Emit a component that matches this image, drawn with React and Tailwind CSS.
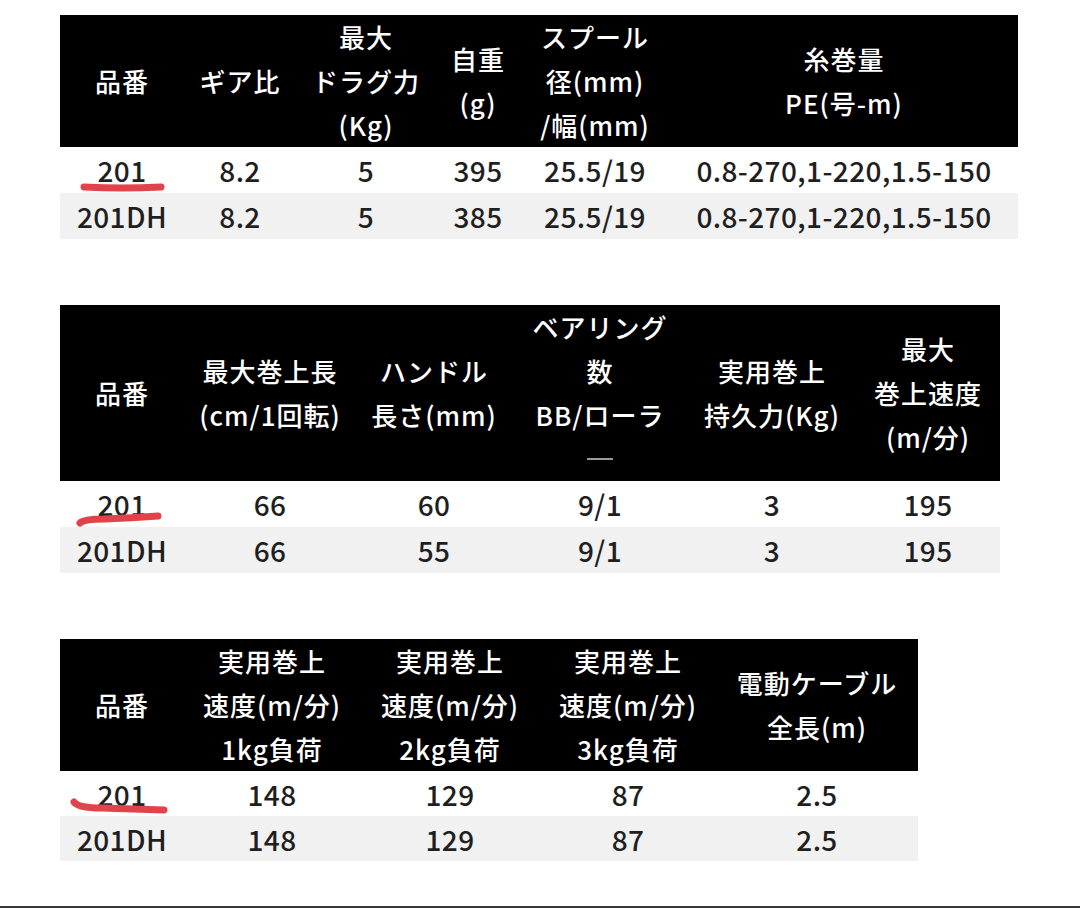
const font = { fontFamily: '"Noto Sans CJK JP", "Noto Sans", sans-serif' }

function HeadCell({ lines }) {
  return (
    <div className="flex flex-col items-center justify-center text-white text-[26px] leading-[44px] font-medium tracking-[1px] whitespace-nowrap">
      {lines.map((l, i) =>
        l === '—' ? (
          <div key={i} className="h-[44px] flex items-center">
            <div className="w-[26px] h-[2px] bg-[#9a9a9a]" />
          </div>
        ) : (
          <div key={i}>{l}</div>
        )
      )}
    </div>
  )
}

function SpecTable({ cols, head, rows, rowH }) {
  return (
    <div className="bg-black grid" style={{ gridTemplateColumns: cols, width: 'fit-content' }}>
      {head.map((h, i) => (
        <HeadCell key={i} lines={h} />
      ))}
      {rows.map((r, ri) =>
        r.map((c, ci) => (
          <div
            key={ri + '-' + ci}
            className={`${rowH} flex items-center justify-center text-[28px] tracking-[0.4px] font-medium text-[#1f1f1f] whitespace-nowrap ${ri === 1 ? 'bg-[#f1f1f1]' : 'bg-white'}`}
          >
            {c}
          </div>
        ))
      )}
    </div>
  )
}

export default function App() {
  return (
    <div className="relative w-[1080px] h-[908px] bg-white overflow-hidden" style={font}>
      <div className="flex flex-col gap-[66px] pt-[15px] pl-[60px]">
        <SpecTable
          cols="124px 112px 140px 84px 150px 348px"
          rowH="h-[46px]"
          head={[
            ['品番'],
            ['ギア比'],
            ['最大', 'ドラグ力', '(Kg)'],
            ['自重', '(g)'],
            ['スプール', '径(mm)', '/幅(mm)'],
            ['糸巻量', 'PE(号-m)'],
          ]}
          rows={[
            ['201', '8.2', '5', '395', '25.5/19', '0.8-270,1-220,1.5-150'],
            ['201DH', '8.2', '5', '385', '25.5/19', '0.8-270,1-220,1.5-150'],
          ]}
        />
        <SpecTable
          cols="124px 172px 156px 176px 168px 144px"
          rowH="h-[46px]"
          head={[
            ['品番'],
            ['最大巻上長', '(cm/1回転)'],
            ['ハンドル', '長さ(mm)'],
            ['ベアリング', '数', 'BB/ローラ', '—'],
            ['実用巻上', '持久力(Kg)'],
            ['最大', '巻上速度', '(m/分)'],
          ]}
          rows={[
            ['201', '66', '60', '9/1', '3', '195'],
            ['201DH', '66', '55', '9/1', '3', '195'],
          ]}
        />
        <SpecTable
          cols="124px 176px 180px 176px 202px"
          rowH="h-[45px]"
          head={[
            ['品番'],
            ['実用巻上', '速度(m/分)', '1kg負荷'],
            ['実用巻上', '速度(m/分)', '2kg負荷'],
            ['実用巻上', '速度(m/分)', '3kg負荷'],
            ['電動ケーブル', '全長(m)'],
          ]}
          rows={[
            ['201', '148', '129', '87', '2.5'],
            ['201DH', '148', '129', '87', '2.5'],
          ]}
        />
      </div>

      {/* red hand-drawn underlines */}
      <svg className="absolute left-0 top-0 pointer-events-none" width="1080" height="908">
        <g stroke="#e2434a" strokeWidth="7" strokeLinecap="round" fill="none">
          <path d="M84 187 Q122 189 161 187" />
          <path d="M80 523 Q84 519 104 519 Q132 518 158 516" />
          <path d="M74 802 Q78 808 102 808 Q135 809 164 810" />
        </g>
      </svg>

      <div className="absolute left-0 right-0 bottom-0 h-[2px] bg-[#3a3a3a]" />
    </div>
  )
}
